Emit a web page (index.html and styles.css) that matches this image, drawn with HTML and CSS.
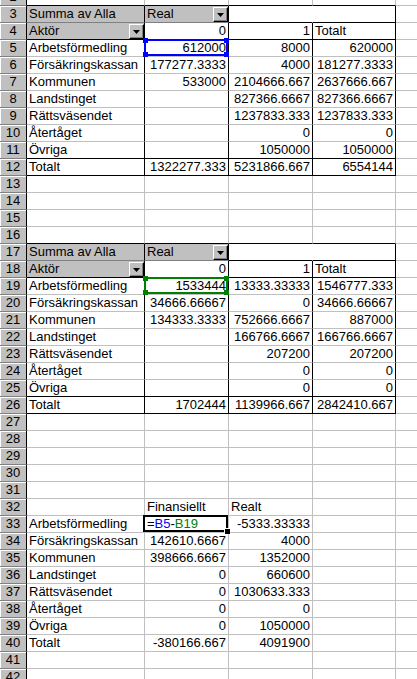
FILE: index.html
```html
<!DOCTYPE html>
<html lang="sv">
<head>
<meta charset="utf-8">
<title>Pivot</title>
<link rel="stylesheet" href="styles.css">
</head>
<body>
<div class="sheet">
  <div class="row"><div class="h">2</div><div class="c kb"></div><div class="c kb"></div><div class="c kb"></div><div class="c kb"></div><div class="c"></div></div>
  <div class="row"><div class="h">3</div><div class="c f kr mb">Summa av Alla</div><div class="c f kr mb dd"><span>Real</span><span class="btn"><svg width="7" height="4" viewBox="0 0 7 4"><polygon points="0,0 7,0 3.5,4" fill="#000"/></svg></span></div><div class="c m kb"></div><div class="c kr kb"></div><div class="c"></div></div>
  <div class="row"><div class="h">4</div><div class="c f kr kb dd"><span>Aktör</span><span class="btn"><svg width="7" height="4" viewBox="0 0 7 4"><polygon points="0,0 7,0 3.5,4" fill="#000"/></svg></span></div><div class="c r kr kb">0</div><div class="c r kr kb">1</div><div class="c kr kb">Totalt</div><div class="c"></div></div>
  <div class="row"><div class="h">5</div><div class="c kr">Arbetsförmedling</div><div class="c r kr ref">612000<span class="rng blue"><i class="tl"></i><i class="tr"></i><i class="bl"></i><i class="br"></i></span></div><div class="c r kr">8000</div><div class="c r kr">620000</div><div class="c"></div></div>
  <div class="row"><div class="h">6</div><div class="c kr">Försäkringskassan</div><div class="c r kr">177277.3333</div><div class="c r kr">4000</div><div class="c r kr">181277.3333</div><div class="c"></div></div>
  <div class="row"><div class="h">7</div><div class="c kr">Kommunen</div><div class="c r kr">533000</div><div class="c r kr">2104666.667</div><div class="c r kr">2637666.667</div><div class="c"></div></div>
  <div class="row"><div class="h">8</div><div class="c kr">Landstinget</div><div class="c r kr"></div><div class="c r kr">827366.6667</div><div class="c r kr">827366.6667</div><div class="c"></div></div>
  <div class="row"><div class="h">9</div><div class="c kr">Rättsväsendet</div><div class="c r kr"></div><div class="c r kr">1237833.333</div><div class="c r kr">1237833.333</div><div class="c"></div></div>
  <div class="row"><div class="h">10</div><div class="c kr">Återtåget</div><div class="c r kr"></div><div class="c r kr">0</div><div class="c r kr">0</div><div class="c"></div></div>
  <div class="row"><div class="h">11</div><div class="c kr kb">Övriga</div><div class="c r kr kb"></div><div class="c r kr kb">1050000</div><div class="c r kr kb">1050000</div><div class="c"></div></div>
  <div class="row"><div class="h">12</div><div class="c kr kb">Totalt</div><div class="c r kr kb">1322277.333</div><div class="c r kr kb">5231866.667</div><div class="c r kr kb">6554144</div><div class="c"></div></div>
  <div class="row"><div class="h">13</div><div class="c"></div><div class="c"></div><div class="c"></div><div class="c"></div><div class="c"></div></div>
  <div class="row"><div class="h">14</div><div class="c"></div><div class="c"></div><div class="c"></div><div class="c"></div><div class="c"></div></div>
  <div class="row"><div class="h">15</div><div class="c"></div><div class="c"></div><div class="c"></div><div class="c"></div><div class="c"></div></div>
  <div class="row"><div class="h">16</div><div class="c kb"></div><div class="c kb"></div><div class="c kb"></div><div class="c kb"></div><div class="c"></div></div>
  <div class="row"><div class="h">17</div><div class="c f kr mb">Summa av Alla</div><div class="c f kr mb dd"><span>Real</span><span class="btn"><svg width="7" height="4" viewBox="0 0 7 4"><polygon points="0,0 7,0 3.5,4" fill="#000"/></svg></span></div><div class="c m kb"></div><div class="c kr kb"></div><div class="c"></div></div>
  <div class="row"><div class="h">18</div><div class="c f kr kb dd"><span>Aktör</span><span class="btn"><svg width="7" height="4" viewBox="0 0 7 4"><polygon points="0,0 7,0 3.5,4" fill="#000"/></svg></span></div><div class="c r kr kb">0</div><div class="c r kr kb">1</div><div class="c kr kb">Totalt</div><div class="c"></div></div>
  <div class="row"><div class="h">19</div><div class="c kr">Arbetsförmedling</div><div class="c r kr ref">1533444<span class="rng green"><i class="tl"></i><i class="tr"></i><i class="bl"></i><i class="br"></i></span></div><div class="c r kr">13333.33333</div><div class="c r kr">1546777.333</div><div class="c"></div></div>
  <div class="row"><div class="h">20</div><div class="c kr">Försäkringskassan</div><div class="c r kr">34666.66667</div><div class="c r kr">0</div><div class="c r kr">34666.66667</div><div class="c"></div></div>
  <div class="row"><div class="h">21</div><div class="c kr">Kommunen</div><div class="c r kr">134333.3333</div><div class="c r kr">752666.6667</div><div class="c r kr">887000</div><div class="c"></div></div>
  <div class="row"><div class="h">22</div><div class="c kr">Landstinget</div><div class="c r kr"></div><div class="c r kr">166766.6667</div><div class="c r kr">166766.6667</div><div class="c"></div></div>
  <div class="row"><div class="h">23</div><div class="c kr">Rättsväsendet</div><div class="c r kr"></div><div class="c r kr">207200</div><div class="c r kr">207200</div><div class="c"></div></div>
  <div class="row"><div class="h">24</div><div class="c kr">Återtåget</div><div class="c r kr"></div><div class="c r kr">0</div><div class="c r kr">0</div><div class="c"></div></div>
  <div class="row"><div class="h">25</div><div class="c kr kb">Övriga</div><div class="c r kr kb"></div><div class="c r kr kb">0</div><div class="c r kr kb">0</div><div class="c"></div></div>
  <div class="row"><div class="h">26</div><div class="c kr kb">Totalt</div><div class="c r kr kb">1702444</div><div class="c r kr kb">1139966.667</div><div class="c r kr kb">2842410.667</div><div class="c"></div></div>
  <div class="row"><div class="h">27</div><div class="c"></div><div class="c"></div><div class="c"></div><div class="c"></div><div class="c"></div></div>
  <div class="row"><div class="h">28</div><div class="c"></div><div class="c"></div><div class="c"></div><div class="c"></div><div class="c"></div></div>
  <div class="row"><div class="h">29</div><div class="c"></div><div class="c"></div><div class="c"></div><div class="c"></div><div class="c"></div></div>
  <div class="row"><div class="h">30</div><div class="c"></div><div class="c"></div><div class="c"></div><div class="c"></div><div class="c"></div></div>
  <div class="row"><div class="h">31</div><div class="c"></div><div class="c"></div><div class="c"></div><div class="c"></div><div class="c"></div></div>
  <div class="row"><div class="h">32</div><div class="c"></div><div class="c">Finansiellt</div><div class="c">Realt</div><div class="c"></div><div class="c"></div></div>
  <div class="row"><div class="h sel">33</div><div class="c">Arbetsförmedling</div><div class="c ref">=<span class="fb">B5</span>-<span class="fg">B19</span><span class="act"><i class="fill"></i></span></div><div class="c r">-5333.33333</div><div class="c"></div><div class="c"></div></div>
  <div class="row"><div class="h">34</div><div class="c">Försäkringskassan</div><div class="c r">142610.6667</div><div class="c r">4000</div><div class="c"></div><div class="c"></div></div>
  <div class="row"><div class="h">35</div><div class="c">Kommunen</div><div class="c r">398666.6667</div><div class="c r">1352000</div><div class="c"></div><div class="c"></div></div>
  <div class="row"><div class="h">36</div><div class="c">Landstinget</div><div class="c r">0</div><div class="c r">660600</div><div class="c"></div><div class="c"></div></div>
  <div class="row"><div class="h">37</div><div class="c">Rättsväsendet</div><div class="c r">0</div><div class="c r">1030633.333</div><div class="c"></div><div class="c"></div></div>
  <div class="row"><div class="h">38</div><div class="c">Återtåget</div><div class="c r">0</div><div class="c r">0</div><div class="c"></div><div class="c"></div></div>
  <div class="row"><div class="h">39</div><div class="c">Övriga</div><div class="c r">0</div><div class="c r">1050000</div><div class="c"></div><div class="c"></div></div>
  <div class="row"><div class="h">40</div><div class="c">Totalt</div><div class="c r">-380166.667</div><div class="c r">4091900</div><div class="c"></div><div class="c"></div></div>
  <div class="row"><div class="h">41</div><div class="c"></div><div class="c"></div><div class="c"></div><div class="c"></div><div class="c"></div></div>
  <div class="row"><div class="h">42</div><div class="c"></div><div class="c"></div><div class="c"></div><div class="c"></div><div class="c"></div></div>
</div>
</body>
</html>
```
FILE: styles.css
```css
html, body {
  margin: 0;
  padding: 0;
  background: #fff;
  overflow: hidden;
  height: 679px;
}
.sheet {
  margin-top: -11px;
  font-family: "Liberation Sans", Arial, sans-serif;
  font-size: 13px;
  color: #000;
}
.row {
  display: grid;
  grid-template-columns: 27px 118px 84px 84px 83px 84px;
  height: 17px;
}
.h, .c {
  box-sizing: border-box;
  height: 17px;
  line-height: 16px;
  white-space: nowrap;
  overflow: visible;
}
.h {
  background: #c0c0c0;
  border-right: 1px solid #000;
  border-bottom: 1px solid #808080;
  text-align: center;
  box-shadow: inset 1px 1px 0 #fff;
}
.c {
  border-right: 1px solid #c0c0c0;
  border-bottom: 1px solid #c0c0c0;
  padding: 0 2px;
  background: #fff;
}
.r { text-align: right; }
.kr { border-right-color: #000; }
.kb { border-bottom-color: #000; }
.mb { border-bottom-color: #808080; }
.m { border-right-color: #fff; }
.f { background: #c0c0c0; }
.dd {
  display: flex;
  justify-content: space-between;
  padding-right: 0;
}
.btn {
  box-sizing: border-box;
  width: 15px;
  height: 15px;
  margin-top: 1px;
  background: #c0c0c0;
  border-top: 1px solid #fff;
  border-left: 1px solid #fff;
  border-right: 1px solid #000;
  border-bottom: 1px solid #000;
  box-shadow: inset -1px -1px 0 #808080;
  display: flex;
  align-items: center;
  justify-content: center;
}
.btn svg { display: block; }
.ref { position: relative; }
.rng {
  position: absolute;
  left: -1px;
  top: -1px;
  right: 0;
  bottom: 0;
  border: 2px solid;
}
.rng.blue { border-color: #0000ff; color: #0000ff; }
.rng.green { border-color: #008000; color: #008000; }
.rng i {
  position: absolute;
  width: 5px;
  height: 5px;
  background: currentColor;
}
.rng .tl { left: -3px; top: -3px; }
.rng .tr { right: -3px; top: -3px; }
.rng .bl { left: -3px; bottom: -3px; }
.rng .br { right: -3px; bottom: -3px; }
.fb { color: #0000ff; }
.fg { color: #008000; }
.act {
  position: absolute;
  left: -2px;
  top: -1px;
  right: 0;
  bottom: 0;
  border: 2px solid #000;
}
.act .fill {
  position: absolute;
  right: -4px;
  bottom: -4px;
  width: 5px;
  height: 5px;
  background: #000;
  border-left: 1px solid #fff;
  border-top: 1px solid #fff;
}
```
